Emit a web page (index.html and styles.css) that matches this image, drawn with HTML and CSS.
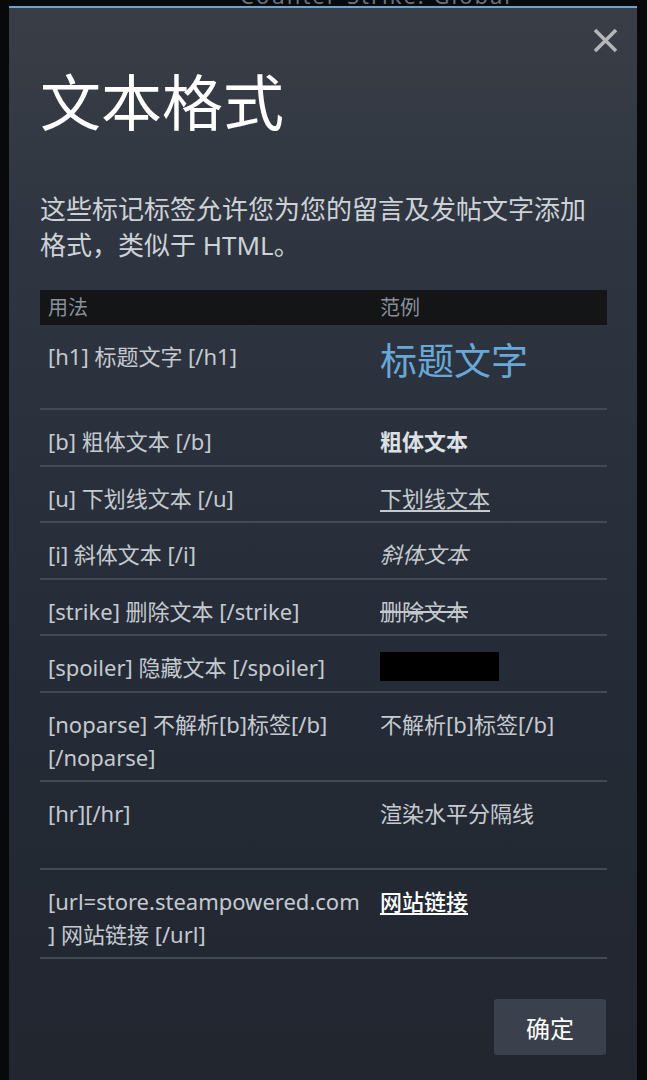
FILE: index.html
```html
<!DOCTYPE html>
<html lang="zh-CN">
<head>
<meta charset="utf-8">
<title>文本格式</title>
<link rel="stylesheet" href="styles.css">
</head>
<body>
<div class="backdrop">
  <div class="behind"><span>Counter-Strike: Global</span></div>
  <div class="dialog">
    <div class="header">
      <h1 class="title">文本格式</h1>
      <button class="close" aria-label="关闭">
        <svg width="25" height="25" viewBox="0 0 25 25"><path d="M2 2 L23 23 M23 2 L2 23" stroke="#b4b7ba" stroke-width="3.6" fill="none"/></svg>
      </button>
    </div>
    <p class="desc">这些标记标签允许您为您的留言及发帖文字添加格式，类似于 HTML。</p>
    <div class="table">
      <div class="thead">
        <div class="th">用法</div>
        <div class="th ex">范例</div>
      </div>
      <div class="row">
        <div class="usage">[h1] 标题文字 [/h1]</div>
        <div class="example"><div class="bb-h1">标题文字</div></div>
      </div>
      <div class="row">
        <div class="usage">[b] 粗体文本 [/b]</div>
        <div class="example"><b class="bb-b">粗体文本</b></div>
      </div>
      <div class="row">
        <div class="usage">[u] 下划线文本 [/u]</div>
        <div class="example"><span class="bb-u">下划线文本</span></div>
      </div>
      <div class="row">
        <div class="usage">[i] 斜体文本 [/i]</div>
        <div class="example"><i class="bb-i">斜体文本</i></div>
      </div>
      <div class="row">
        <div class="usage">[strike] 删除文本 [/strike]</div>
        <div class="example"><span class="bb-s">删除文本</span></div>
      </div>
      <div class="row">
        <div class="usage">[spoiler] 隐藏文本 [/spoiler]</div>
        <div class="example"><span class="bb-spoiler">隐藏文本</span></div>
      </div>
      <div class="row">
        <div class="usage">[noparse] 不解析[b]标签[/b]<br>[/noparse]</div>
        <div class="example">不解析[b]标签[/b]</div>
      </div>
      <div class="row">
        <div class="usage">[hr][/hr]</div>
        <div class="example">渲染水平分隔线<hr class="bb-hr"></div>
      </div>
      <div class="row">
        <div class="usage">[url=store.steampowered.com<br>] 网站链接 [/url]</div>
        <div class="example"><a class="bb-link" href="#">网站链接</a></div>
      </div>
    </div>
    <div class="footer">
      <button class="ok">确定</button>
    </div>
  </div>
</div>
</body>
</html>
```
FILE: styles.css
```css
html, body {
  margin: 0;
  padding: 0;
  height: 1080px;
  overflow: hidden;
  background: #07090b;
}
body {
  font-family: "Noto Sans", "Noto Sans CJK SC", sans-serif;
}
.backdrop {
  display: flex;
  flex-direction: column;
  height: 1080px;
}
.behind {
  height: 6px;
  overflow: hidden;
  padding-left: 240px;
}
.behind span {
  display: block;
  margin-top: -15px;
  font-size: 22px;
  line-height: 20px;
  color: #6c7279;
  letter-spacing: 2px;
}
.dialog {
  margin-left: 9px;
  width: 628px;
  flex: 1;
  border-top: 2px solid #6aa5d2;
  background: linear-gradient(180deg, #393e46 0%, #303641 20%, #2a313c 40%, #252b36 65%, #21262f 100%);
  padding: 0 30px 0 31px;
  box-sizing: border-box;
}
.header {
  display: flex;
  justify-content: space-between;
  align-items: flex-start;
  padding-top: 20px;
}
.title {
  margin: 36px 0 0 0;
  font-family: "Noto Sans CJK SC", sans-serif;
  font-size: 61px;
  line-height: 72px;
  font-weight: 400;
  color: #ffffff;
}
.close {
  margin: 0 -11px 0 0;
  padding: 0;
  border: 0;
  background: none;
  width: 25px;
  height: 25px;
  display: block;
}
.close svg { display: block; }
.desc {
  margin: 55px 0 0 0;
  font-size: 26px;
  line-height: 36px;
  color: #cdd2d7;
}
.table {
  margin-top: 27px;
}
.thead {
  display: grid;
  grid-template-columns: 340px 1fr;
  background: #131517;
  height: 35px;
}
.th {
  padding-left: 8px;
  font-size: 20px;
  line-height: 35px;
  color: #8a9199;
}
.th.ex, .example { padding-left: 0; }
.row {
  display: grid;
  grid-template-columns: 340px 1fr;
  padding: 15px 0 7.1px;
  border-bottom: 2px solid #434a54;
  font-size: 22px;
  line-height: 32.5px;
  color: #c5cad0;
}
.usage {
  padding-left: 8px;
}
.bb-h1 {
  font-size: 37px;
  line-height: 42px;
  padding-bottom: 19px;
  color: #68a8d6;
}
.bb-b {
  font-weight: 700;
  color: #dde1e5;
}
.bb-u {
  text-decoration: underline;
  text-underline-offset: 3px;
}
.bb-i { font-style: italic; }
.bb-s { text-decoration: line-through; }
.bb-spoiler {
  display: inline-block;
  background: #000;
  color: #000;
  padding: 0 15.5px;
  line-height: 29px;
  vertical-align: top;
  margin-top: 1px;
}
.bb-hr {
  border: 0;
  height: 1px;
  margin: 15px 0 15.5px;
  background: transparent;
}
.bb-link {
  color: #ffffff;
  font-weight: 500;
  text-decoration: underline;
  text-underline-offset: 3px;
}
.footer {
  display: flex;
  justify-content: flex-end;
  margin-top: 40px;
  margin-right: 1px;
}
.ok {
  width: 112px;
  height: 56px;
  border: 0;
  border-radius: 3px;
  background: #3b414c;
  color: #ffffff;
  font-family: "Noto Sans CJK SC", sans-serif;
  font-size: 24px;
  padding: 0;
}
```
